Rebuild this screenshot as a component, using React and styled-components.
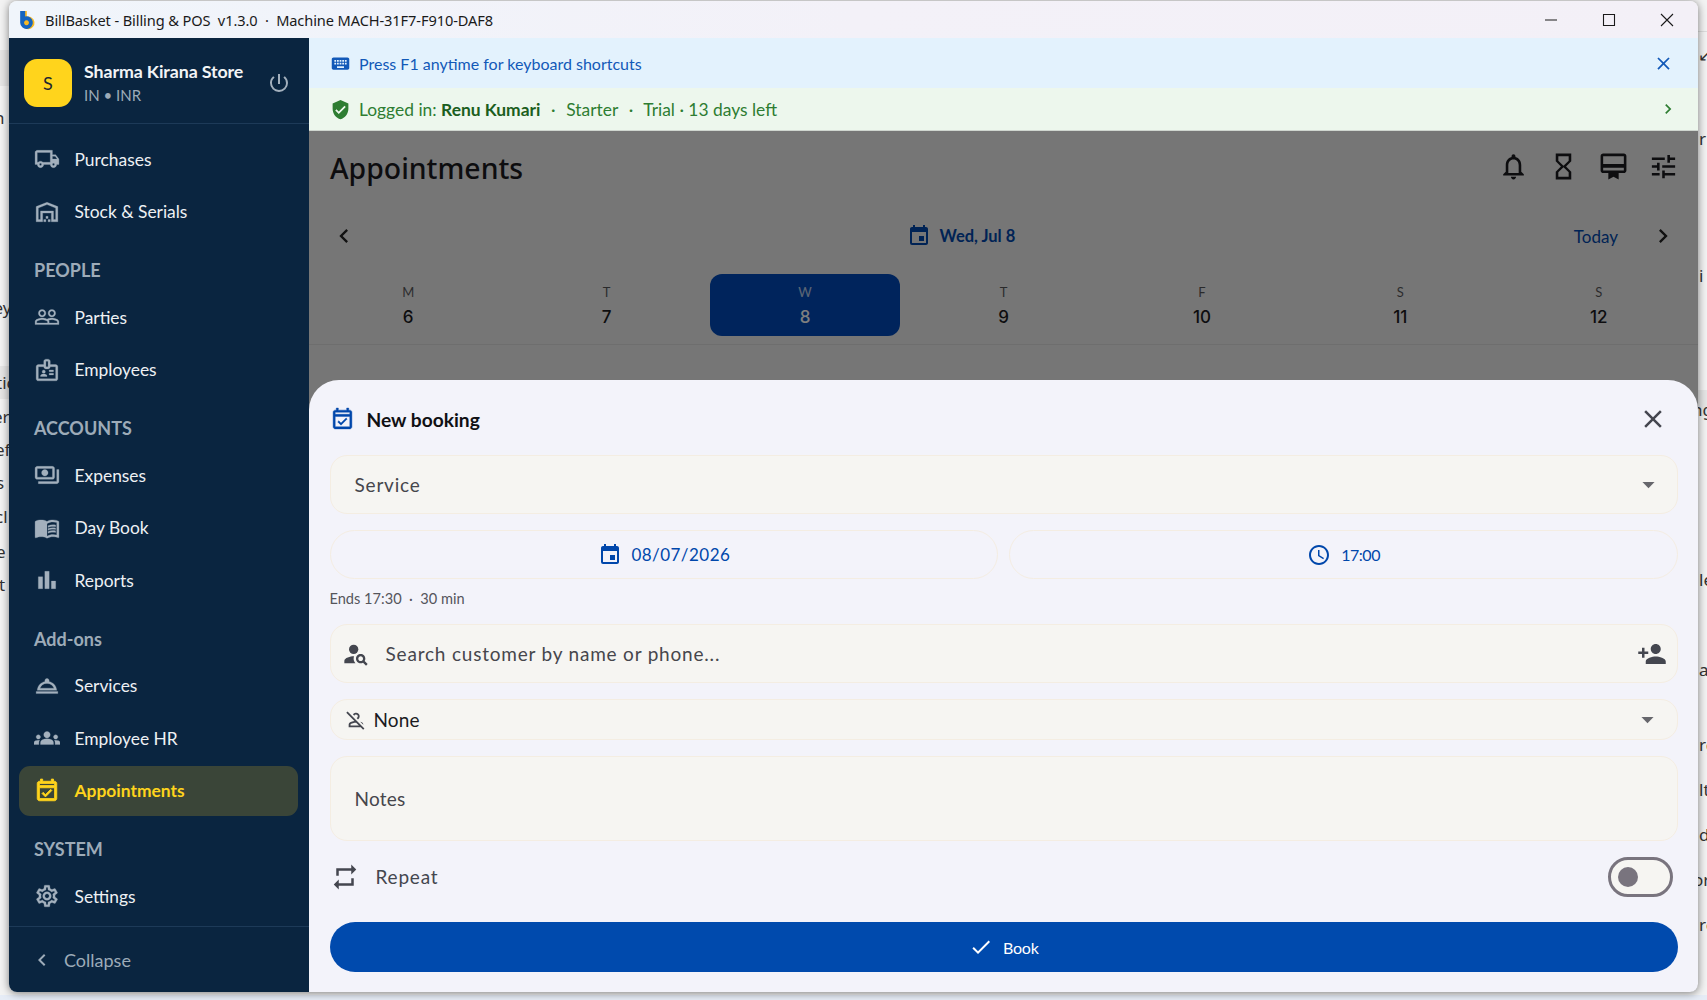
import React from "react";
import styled, { createGlobalStyle } from "styled-components";
import {
  MdOutlineLocalShipping, MdOutlineWarehouse, MdPeopleOutline, MdOutlineBadge, MdOutlinePayments,
  MdMenuBook, MdBarChart, MdOutlineRoomService, MdGroups, MdOutlineEventAvailable, MdOutlineSettings,
  MdChevronLeft, MdChevronRight, MdPowerSettingsNew, MdKeyboard, MdVerifiedUser, MdClose,
  MdNotificationsNone, MdHourglassEmpty, MdCardMembership, MdTune, MdEvent, MdAccessTime,
  MdPersonSearch, MdPersonAdd, MdOutlinePersonOff, MdRepeat, MdCheck, MdArrowDropDown,
} from "react-icons/md";

const UI = `"Lato", "Noto Sans", sans-serif`;

const Global = createGlobalStyle`
  html, body { margin: 0; padding: 0; height: 100%; overflow: hidden; }
  body { font-family: ${UI}; }
  * { box-sizing: border-box; }
`;

const Desktop = styled.div`
  position: relative;
  width: 1707px;
  height: 1000px;
  overflow: hidden;
  background: #f3f3f3;
`;
const DesktopBand = styled.div`
  position: absolute;
  left: ${(p) => p.$x}px;
  top: ${(p) => p.$y}px;
  width: ${(p) => p.$w}px;
  height: ${(p) => p.$h}px;
  background: ${(p) => p.$c};
`;
const BehindText = styled.span`
  position: absolute;
  left: ${(p) => p.$x}px;
  top: ${(p) => p.$y - 12}px;
  line-height: 24px;
  font-family: "Noto Sans", sans-serif;
  font-size: 17px;
  color: #333;
  white-space: nowrap;
`;

const Window = styled.div`
  position: absolute;
  left: 9px;
  top: 1px;
  width: 1689px;
  height: 991px;
  display: flex;
  flex-direction: column;
  border-radius: 8px;
  overflow: hidden;
  box-shadow: 0 1px 9px rgba(0, 0, 0, 0.5);
`;
const TitleBar = styled.div`
  height: 37px;
  flex: none;
  display: flex;
  align-items: center;
  padding: 0 2px 0 10px;
  background: linear-gradient(90deg, #f0f5fb, #f3f1f8 50%, #f3f0f7);
`;
const TitleText = styled.span`
  margin-left: 7px;
  font-family: "Noto Sans", sans-serif;
  font-size: 14.6px;
  color: #1a1a1a;
  white-space: pre;
  flex: 1;
  letter-spacing: -0.1px;
`;
const WinBtn = styled.div`
  width: 58px;
  height: 37px;
  display: flex;
  align-items: center;
  justify-content: center;
  color: #1a1a1a;
`;
const Body = styled.div`
  flex: 1;
  display: flex;
  min-height: 0;
`;

const Sidebar = styled.aside`
  width: 300px;
  flex: none;
  display: flex;
  flex-direction: column;
  background: #0a2540;
`;
const BrandRow = styled.div`
  height: 86px;
  flex: none;
  display: flex;
  align-items: center;
  padding: 5px 18px 0 15px;
  border-bottom: 1px solid #1d3a58;
`;
const Avatar = styled.div`
  width: 48px;
  height: 48px;
  border-radius: 13px;
  background: #ffd41c;
  color: #1c2430;
  display: flex;
  align-items: center;
  justify-content: center;
  font-size: 18px;
`;
const BrandText = styled.div`
  margin-left: 12px;
  flex: 1;
`;
const BrandName = styled.div`
  font-size: 17.8px;
  font-weight: 700;
  color: #f2f4f6;
  line-height: 24px;
  letter-spacing: -0.1px;
`;
const BrandSub = styled.div`
  font-size: 15px;
  color: #9dabb8;
  line-height: 24px;
`;
const PowerIcon = styled(MdPowerSettingsNew)`
  color: #a3b0bd;
  font-size: 24px;
`;
const Nav = styled.nav`
  flex: 1;
  display: flex;
  flex-direction: column;
  padding: 9px 11px 0 10px;
  overflow: hidden;
`;
const NavLabel = styled.div`
  padding: 22px 0 11px 15px;
  line-height: 20px;
  font-size: 18px;
  font-weight: 700;
  color: #9dabb8;
`;
const NavItem = styled.div`
  height: 50px;
  flex: none;
  margin: 1.25px 0;
  display: flex;
  align-items: center;
  gap: 15px;
  padding-left: 14.5px;
  border-radius: 11px;
  font-size: 17.4px;
  font-weight: ${(p) => (p.$active ? 700 : 400)};
  color: ${(p) => (p.$active ? "#ffd41c" : "#eef1f4")};
  background: ${(p) => (p.$active ? "#3a4538" : "transparent")};
  svg {
    flex: none;
    font-size: 26px;
    color: ${(p) => (p.$active ? "#ffd41c" : "#a3b0bd")};
    stroke: currentColor;
    stroke-width: ${(p) => (p.$active ? 0.8 : 0.25)};
  }
  svg path[fill="none"] { stroke: none; }
`;
const CollapseRow = styled.div`
  height: 66px;
  flex: none;
  display: flex;
  align-items: center;
  gap: 10px;
  padding-left: 21px;
  border-top: 1px solid #1d3a58;
  font-size: 18px;
  color: #9dabb8;
  svg { font-size: 24px; }
`;

const Main = styled.main`
  flex: 1;
  min-width: 0;
  display: flex;
  flex-direction: column;
`;
const Banner = styled.div`
  height: ${(p) => p.$h}px;
  flex: none;
  display: flex;
  align-items: center;
  padding: 0 24px 0 21px;
  gap: 8px;
  background: ${(p) => p.$bg};
  color: ${(p) => p.$fg};
  font-size: ${(p) => p.$fs}px;
  border-bottom: ${(p) => p.$line || "none"};
`;
const BannerText = styled.span`
  flex: 1;
  white-space: pre;
`;
const BannerName = styled.b`
  font-weight: 700;
  color: #1b5e20;
`;
const BannerSep = styled.span`
  margin: 0 1.8px;
`;
const BannerChevron = styled(MdChevronRight)`
  font-size: 20px;
  margin-right: -4px;
`;
const Page = styled.div`
  position: relative;
  flex: 1;
  min-height: 0;
  background: #ececec;
  overflow: hidden;
`;
const PageHead = styled.header`
  height: 74px;
  display: flex;
  align-items: center;
  padding: 0 10px 0 21px;
`;
const PageTitle = styled.h1`
  flex: 1;
  margin: 0;
  font-family: "Noto Sans", sans-serif;
  font-size: 28.4px;
  font-weight: 500;
  color: #1b1b1f;
`;
const ToolBtn = styled.div`
  width: 50px;
  display: flex;
  justify-content: center;
  margin-bottom: 4px;
  color: #1b1b1f;
  svg { font-size: 31px; }
`;
const DateRow = styled.div`
  height: 62px;
  display: flex;
  align-items: center;
  padding: 0 10px;
`;
const DateNav = styled.div`
  width: 50px;
  display: flex;
  justify-content: center;
  color: #222;
  svg { font-size: 28px; }
`;
const DateCenter = styled.div`
  flex: 1;
  display: flex;
  justify-content: center;
  align-items: center;
  gap: 9px;
  margin-left: -7px;
  font-size: 16.5px;
  font-weight: 700;
  color: #0047ab;
  svg { font-size: 24px; }
`;
const TodayBtn = styled.span`
  font-size: 17px;
  color: #0047ab;
  padding: 0 20px 0 14px;
`;
const WeekGrid = styled.div`
  display: grid;
  grid-template-columns: repeat(7, 1fr);
  margin-top: 7px;
  padding-bottom: 8px;
  border-bottom: 1px solid #dcdcdc;
`;
const DayCell = styled.div`
  height: 62px;
  margin: 0 4.5px;
  display: flex;
  flex-direction: column;
  align-items: center;
  padding-top: 10px;
  border-radius: 12px;
  background: ${(p) => (p.$on ? "#0049b8" : "transparent")};
  color: ${(p) => (p.$on ? "#fff" : "#1b1b1f")};
`;
const DayLetter = styled.span`
  font-size: 13px;
  line-height: 17px;
  opacity: 0.72;
`;
const DayNumber = styled.span`
  margin-top: 4px;
  font-family: "Inter", sans-serif;
  font-size: 17px;
  line-height: 24px;
  font-weight: 500;
`;
const Scrim = styled.div`
  position: absolute;
  inset: 0;
  background: rgba(0, 0, 0, 0.5);
`;
const Sheet = styled.section`
  position: absolute;
  left: 0;
  right: 0;
  bottom: 0;
  height: 612px;
  padding: 0 20px 20px 20.5px;
  display: flex;
  flex-direction: column;
  background: #f3f3fa;
  border-radius: 30px 30px 0 0;
`;
const SheetHead = styled.div`
  height: 75px;
  flex: none;
  display: flex;
  align-items: center;
  gap: 12px;
  padding-top: 3px;
  font-size: 19.2px;
  color: #101014;
`;
const SheetTitle = styled.span`
  flex: 1;
  font-weight: 700;
`;
const SheetIcon = styled(MdOutlineEventAvailable)`
  color: #0047ab;
  font-size: 25px;
  stroke: currentColor;
  stroke-width: 0.4;
  path[fill="none"] { stroke: none; }
`;
const SheetClose = styled(MdClose)`
  color: #44464f;
  font-size: 30px;
  margin-right: 10px;
`;
const Field = styled.div`
  height: ${(p) => p.$h}px;
  flex: none;
  margin-bottom: 16px;
  display: flex;
  align-items: center;
  padding: ${(p) => p.$pad || "0 14px 0 24px"};
  gap: ${(p) => p.$gap || 0}px;
  border: 1px solid #f4ede2;
  border-radius: 17px;
  background: #f6f5f2;
  color: #46464c;
  font-size: 19px;
`;
const FieldText = styled.span`
  flex: 1;
  color: ${(p) => p.$fg || "inherit"};
  letter-spacing: ${(p) => p.$ls ?? 0.8}px;
`;
const Caret = styled(MdArrowDropDown)`
  font-size: 29px;
  color: #66666c;
`;
const FieldIcon = styled.span`
  display: flex;
  color: #44464f;
  svg { font-size: ${(p) => p.$size || 28}px; }
`;
const PickRow = styled.div`
  display: flex;
  gap: 11px;
  flex: none;
`;
const PickBtn = styled.div`
  flex: 1;
  height: 49px;
  display: flex;
  align-items: center;
  justify-content: center;
  gap: 10px;
  border: 1px solid #f4ede2;
  border-radius: 25px;
  color: #0047ab;
  font-size: ${(p) => (p.$tight ? 16 : 17)}px;
  letter-spacing: ${(p) => (p.$tight ? -0.5 : 0.45)}px;
  svg { font-size: 24px; }
`;
const HintRow = styled.div`
  height: 45px;
  flex: none;
  padding-top: 11px;
  font-size: 14.6px;
  line-height: 18px;
  color: #55555c;
  white-space: pre;
`;
const RepeatRow = styled.div`
  flex: 1;
  display: flex;
  align-items: center;
  margin-top: -16px;
  padding: 0 5px 10px 0;
  color: #44464f;
  font-size: 19px;
  gap: 16px;
  svg { font-size: 30px; }
`;
const RepeatLabel = styled.span`
  flex: 1;
  letter-spacing: 0.8px;
`;
const Toggle = styled.div`
  width: 65px;
  height: 40px;
  display: flex;
  align-items: center;
  padding-left: 7px;
  border: 3px solid #79747e;
  border-radius: 20px;
  background: #f6f5f2;
`;
const Thumb = styled.div`
  width: 20px;
  height: 20px;
  border-radius: 50%;
  background: #79747e;
`;
const BookBtn = styled.div`
  height: 50px;
  flex: none;
  display: flex;
  align-items: center;
  justify-content: center;
  gap: 10px;
  border-radius: 25px;
  background: #004aad;
  color: #fff;
  font-size: 16px;
  letter-spacing: -0.2px;
  svg { font-size: 24px; }
`;

const Logo = () => (
  <svg width="19" height="20" viewBox="0 0 17 18">
    <path d="M2.500 1h4.500v5a5.700 5.700 0 1 1-4.500 5.500z" fill="#f7b924" />
    <path fillRule="evenodd" d="M1 1h4.500v4.800A5.700 5.700 0 1 1 1 11.500zM6.700 9.300a2.200 2.200 0 1 0 0.010 0z" fill="#1565c0" />
  </svg>
);

const WinGlyph = ({ d }) => (
  <svg width="14" height="14" viewBox="0 0 14 14" fill="none" stroke="currentColor" strokeWidth="1.1"><path d={d} /></svg>
);

const NAV = [
  { kind: "item", label: "Purchases", Icon: MdOutlineLocalShipping },
  { kind: "item", label: "Stock & Serials", Icon: MdOutlineWarehouse },
  { kind: "label", label: "PEOPLE" },
  { kind: "item", label: "Parties", Icon: MdPeopleOutline },
  { kind: "item", label: "Employees", Icon: MdOutlineBadge },
  { kind: "label", label: "ACCOUNTS" },
  { kind: "item", label: "Expenses", Icon: MdOutlinePayments },
  { kind: "item", label: "Day Book", Icon: MdMenuBook },
  { kind: "item", label: "Reports", Icon: MdBarChart },
  { kind: "label", label: "Add-ons" },
  { kind: "item", label: "Services", Icon: MdOutlineRoomService },
  { kind: "item", label: "Employee HR", Icon: MdGroups },
  { kind: "item", label: "Appointments", Icon: MdOutlineEventAvailable, active: true },
  { kind: "label", label: "SYSTEM" },
  { kind: "item", label: "Settings", Icon: MdOutlineSettings },
];

const DAYS = [["M", 6], ["T", 7], ["W", 8], ["T", 9], ["F", 10], ["S", 11], ["S", 12]];

const BEHIND = [
  [-6, 118, "n"], [-6.5, 308, "ey"], [-4, 383, "tic"], [-7, 417, "er"], [-5, 450, "ef"], [-4, 483, "s"],
  [-5, 517, "cl"], [-4, 552, "e"], [-1, 585, "t"],
  [1699, 139, "r"], [1699, 276, "i"], [1692, 410, "ng"], [1699, 580, "le"], [1699, 670, "a"],
  [1699, 745, "rg"], [1699, 790, "lt"], [1699, 835, "d"], [1693, 880, "or"], [1699, 925, "re"], [1698, 55, "↙"],
];

export default function App() {
  return (
    <Desktop>
      <Global />
      <DesktopBand $x={0} $y={50} $w={9} $h={36} $c="#e6e6e6" />
      <DesktopBand $x={0} $y={366} $w={9} $h={33} $c="#e6e6e6" />
      <DesktopBand $x={1698} $y={390} $w={9} $h={26} $c="#e6e6e6" />
      <DesktopBand $x={1698} $y={31} $w={9} $h={1} $c="#dddddd" />
      <DesktopBand $x={0} $y={995} $w={1707} $h={5} $c="#e6ecf6" />
      {BEHIND.map(([x, y, t]) => (
        <BehindText key={`${x}-${y}`} $x={x} $y={y}>{t}</BehindText>
      ))}
      <Window>
        <TitleBar>
          <Logo />
          <TitleText>BillBasket - Billing &amp; POS  v1.3.0  ·  Machine MACH-31F7-F910-DAF8</TitleText>
          <WinBtn><WinGlyph d="M1 7h12" /></WinBtn>
          <WinBtn><WinGlyph d="M1.500 1.500h11v11h-11z" /></WinBtn>
          <WinBtn><WinGlyph d="M1 1l12 12M13 1L1 13" /></WinBtn>
        </TitleBar>
        <Body>
          <Sidebar>
            <BrandRow>
              <Avatar>S</Avatar>
              <BrandText>
                <BrandName>Sharma Kirana Store</BrandName>
                <BrandSub>IN • INR</BrandSub>
              </BrandText>
              <PowerIcon />
            </BrandRow>
            <Nav>
              {NAV.map((n) =>
                n.kind === "label" ? (
                  <NavLabel key={n.label}>{n.label}</NavLabel>
                ) : (
                  <NavItem key={n.label} $active={n.active}>
                    <n.Icon />
                    {n.label}
                  </NavItem>
                )
              )}
            </Nav>
            <CollapseRow>
              <MdChevronLeft />
              Collapse
            </CollapseRow>
          </Sidebar>
          <Main>
            <Banner $h={50} $fs={16} $bg="#e3f2fd" $fg="#1259b8">
              <MdKeyboard size={21} />
              <BannerText>Press F1 anytime for keyboard shortcuts</BannerText>
              <MdClose size={21} />
            </Banner>
            <Banner $h={43} $fs={17.4} $bg="#edf7ed" $fg="#2e7d32" $line="1px solid #cfd6cf">
              <MdVerifiedUser size={21} />
              <BannerText>Logged in: <BannerName>Renu Kumari</BannerName>  <BannerSep>·</BannerSep>  Starter  <BannerSep>·</BannerSep>  Trial · 13 days left</BannerText>
              <BannerChevron />
            </Banner>
            <Page>
              <PageHead>
                <PageTitle>Appointments</PageTitle>
                <ToolBtn><MdNotificationsNone /></ToolBtn>
                <ToolBtn><MdHourglassEmpty /></ToolBtn>
                <ToolBtn><MdCardMembership /></ToolBtn>
                <ToolBtn><MdTune /></ToolBtn>
              </PageHead>
              <DateRow>
                <DateNav><MdChevronLeft /></DateNav>
                <DateCenter><MdEvent />Wed, Jul 8</DateCenter>
                <TodayBtn>Today</TodayBtn>
                <DateNav><MdChevronRight /></DateNav>
              </DateRow>
              <WeekGrid>
                {DAYS.map(([l, n]) => (
                  <DayCell key={n} $on={n === 8}>
                    <DayLetter>{l}</DayLetter>
                    <DayNumber>{n}</DayNumber>
                  </DayCell>
                ))}
              </WeekGrid>
              <Scrim />
              <Sheet>
                <SheetHead>
                  <SheetIcon />
                  <SheetTitle>New booking</SheetTitle>
                  <SheetClose />
                </SheetHead>
                <Field $h={59}>
                  <FieldText>Service</FieldText>
                  <Caret />
                </Field>
                <PickRow>
                  <PickBtn><MdEvent />08/07/2026</PickBtn>
                  <PickBtn $tight><MdAccessTime />17:00</PickBtn>
                </PickRow>
                <HintRow>Ends 17:30  ·  30 min</HintRow>
                <Field $h={59} $pad="0 10px 0 11px" $gap={16}>
                  <FieldIcon><MdPersonSearch /></FieldIcon>
                  <FieldText>Search customer by name or phone...</FieldText>
                  <FieldIcon $size={30}><MdPersonAdd /></FieldIcon>
                </Field>
                <Field $h={41} $pad="0 15px 0 14px" $gap={7}>
                  <FieldIcon $size={22}><MdOutlinePersonOff /></FieldIcon>
                  <FieldText $fg="#1b1b1f" $ls={0.1}>None</FieldText>
                  <Caret />
                </Field>
                <Field $h={85}>
                  <FieldText $ls={0.2}>Notes</FieldText>
                </Field>
                <RepeatRow>
                  <MdRepeat />
                  <RepeatLabel>Repeat</RepeatLabel>
                  <Toggle><Thumb /></Toggle>
                </RepeatRow>
                <BookBtn><MdCheck />Book</BookBtn>
              </Sheet>
            </Page>
          </Main>
        </Body>
      </Window>
    </Desktop>
  );
}
